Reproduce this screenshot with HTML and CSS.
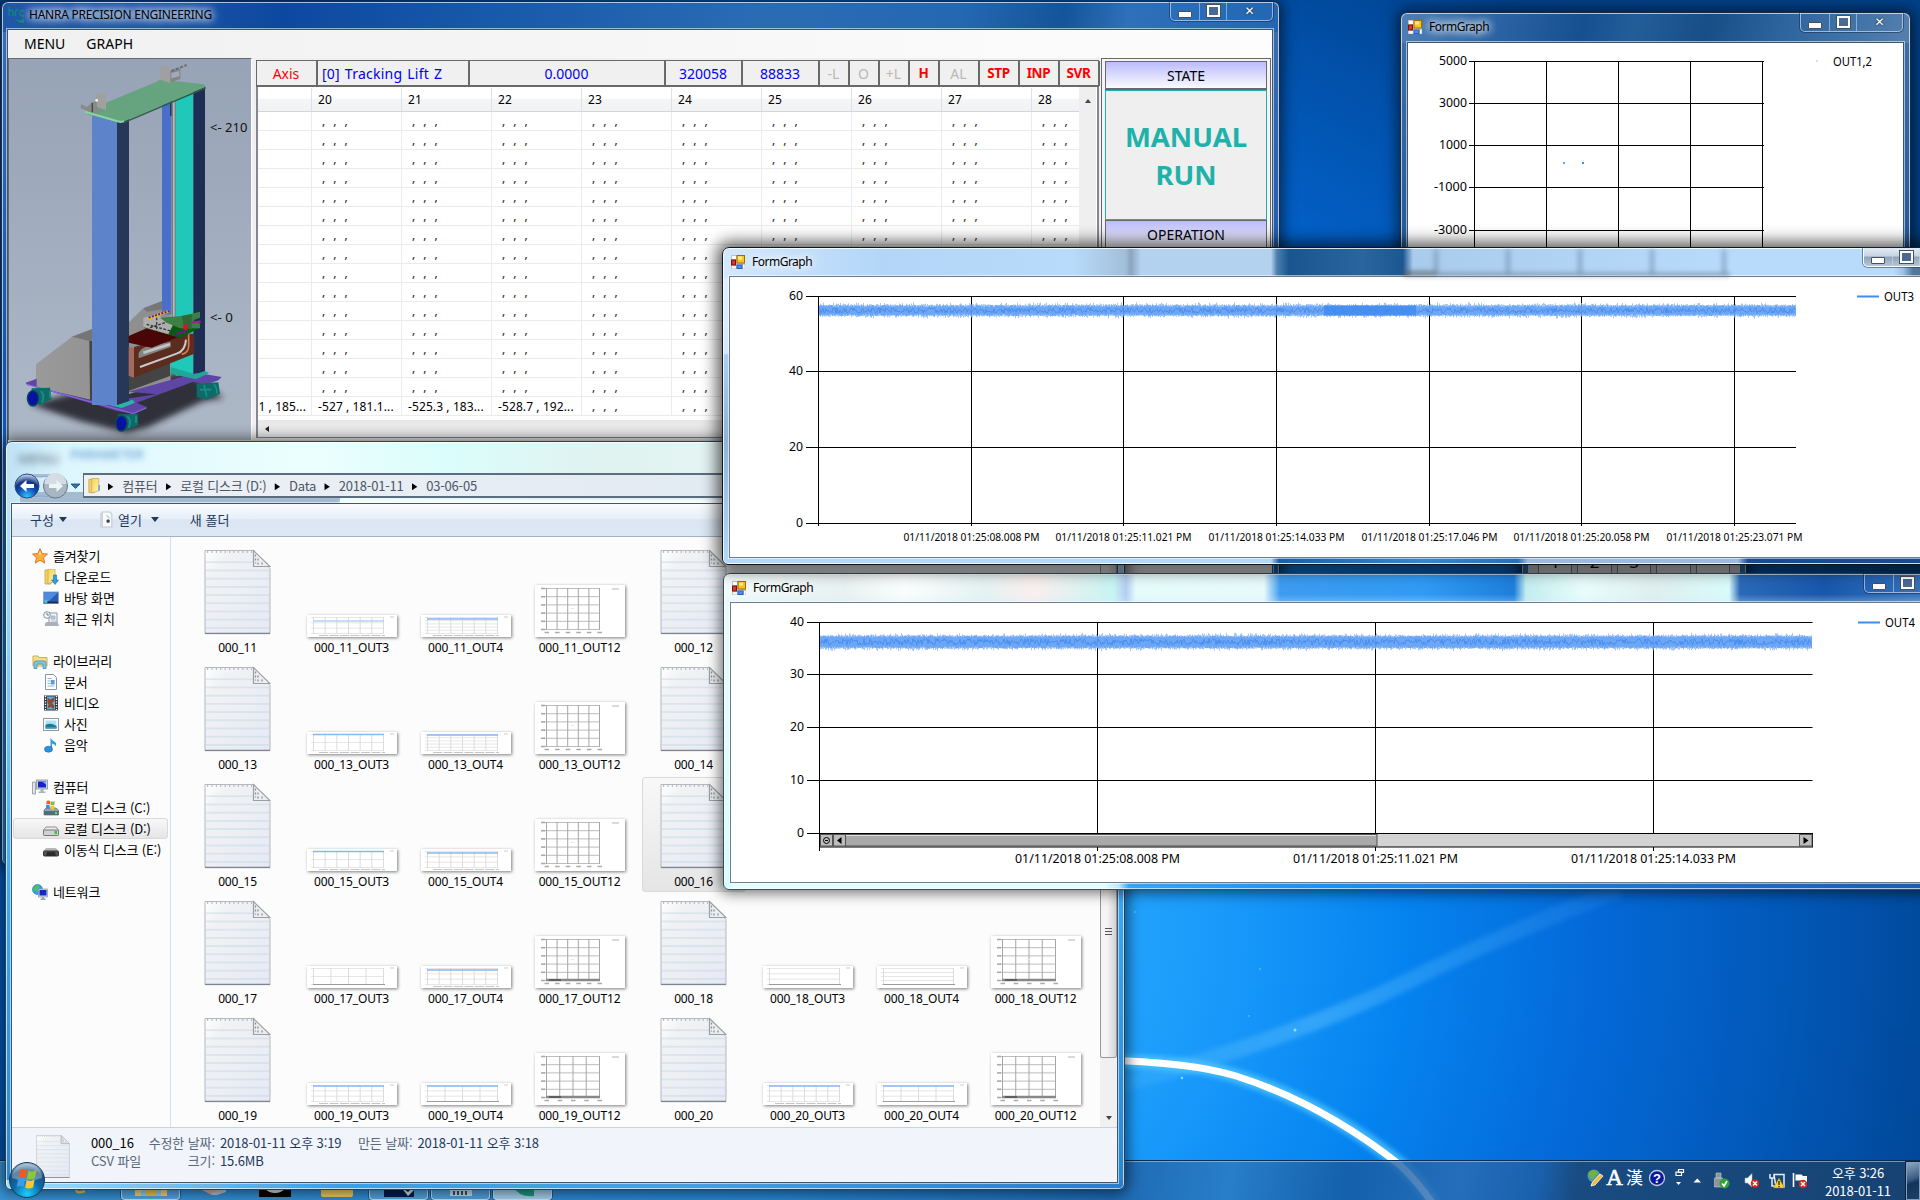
FILE: index.html
```html
<!DOCTYPE html>
<html lang="ko">
<head>
<meta charset="utf-8">
<title>Desktop</title>
<link rel="stylesheet" href="styles.css">
</head>
<body>
<svg class="defs" width="0" height="0">
  <defs>
    <linearGradient id="paper" x1="0" y1="0" x2="1" y2="1"><stop offset="0" stop-color="#fff"/><stop offset=".2" stop-color="#f1f2f4"/><stop offset="1" stop-color="#e6e9f5"/></linearGradient>
    <pattern id="rule" width="67" height="8.2" patternUnits="userSpaceOnUse"><path d="M0 4.5H67" stroke="#c3d7e2" stroke-width="1"/></pattern>
    <linearGradient id="fold" x1="0" y1="0" x2="1" y2="1"><stop offset="0" stop-color="#f6d25c"/><stop offset="1" stop-color="#fdf3b0"/></linearGradient>
    <radialGradient id="orb" cx=".5" cy=".9" r=".9"><stop offset="0" stop-color="#19d0ff"/><stop offset=".45" stop-color="#0a6ba8"/><stop offset=".75" stop-color="#1d4f7c"/><stop offset="1" stop-color="#a9c7db"/></radialGradient>
    <radialGradient id="backb" cx=".5" cy=".95" r=".9"><stop offset="0" stop-color="#39c3ff"/><stop offset=".45" stop-color="#0d4fb4"/><stop offset=".7" stop-color="#12347f"/><stop offset="1" stop-color="#b6c9e6"/></radialGradient>
    <filter id="soft"><feGaussianBlur stdDeviation="9"/></filter>
    <filter id="soft2"><feGaussianBlur stdDeviation="2.5"/></filter>
    <linearGradient id="boxg" x1="0" x2="1"><stop offset="0" stop-color="#9a9a9a"/><stop offset="1" stop-color="#939393"/></linearGradient>

    <symbol id="doc" viewBox="0 0 67 85">
      <path d="M1 1H49L66 19V84H1Z" fill="url(#paper)" stroke="#b4b7bd"/>
      <path d="M1.5 10H52L65 20V83H1.5Z" fill="url(#rule)"/>
      <path d="M3 2.5H48" stroke="#b9bcc4" stroke-width="2" stroke-dasharray="1.2 3.2"/>
      <path d="M49.500 1V17H66Z" fill="#eceef1" stroke="#9b9ea3" stroke-width="1.2"/>
      <path d="M51.500 5v9M54 9v6M58 13v3" stroke="#8d9196" stroke-width="1.300" stroke-dasharray="2 2"/>
      <path d="M1 84H66" stroke="#7e8490" stroke-width="1.6"/>
    </symbol>
    <symbol id="form" viewBox="0 0 14 14">
      <rect width="14" height="14" fill="#c4c4c4"/><rect x="1" y="1" width="4" height="3" fill="#fff"/><rect x="1" y="11" width="4" height="2.500" fill="#f4f4f4"/>
      <rect x="6" y=".5" width="7.500" height="7.500" fill="#fac51c" stroke="#a06c00"/><rect x="7" y="1.500" width="4" height="3" fill="#ffe98c"/>
      <rect x=".5" y="5" width="4" height="5" fill="#d03a2c" stroke="#7c0f0a"/>
      <rect x="6" y="10" width="5" height="3.500" fill="#4b8ef2" stroke="#2a5cc0"/><rect x="12" y="10" width="1.500" height="3.500" fill="#fff"/>
    </symbol>
    <symbol id="star" viewBox="0 0 16 16"><path d="M8 .6l2.200 5 5.300.5-4 3.600 1.200 5.400L8 12.300l-4.700 2.800 1.200-5.400-4-3.600 5.300-.5z" fill="#fbb03c" stroke="#d9782a"/><path d="M8 3l1.300 3.600H6.500z" fill="#ffe3a0"/></symbol>
    <symbol id="folder" viewBox="0 0 16 16"><path d="M2 1h6v14H2z" fill="#f3d169" stroke="#c9a23c" stroke-width=".8"/><path d="M5 0h7.500v13L5 15.500z" fill="url(#fold)" stroke="#d0aa45" stroke-width=".8"/><path d="M13 7v6" stroke="#56a6df" stroke-width="1.500"/></symbol>
    <symbol id="down" viewBox="0 0 16 16"><path d="M2 1h6v14H2z" fill="#f3d169" stroke="#c9a23c" stroke-width=".8"/><path d="M5 0h7v12L5 15z" fill="url(#fold)" stroke="#d0aa45" stroke-width=".8"/><path d="M10.500 6h3v5h2L12 15.500 8.500 11h2z" fill="#2d9fe8" stroke="#1269ac" stroke-width=".6"/></symbol>
    <symbol id="desk" viewBox="0 0 16 16"><rect x=".5" y="2" width="15" height="11.500" fill="#2a5bb5" stroke="#8fa3bb"/><path d="M1 2.500h14L6 11H1z" fill="#4f8ae0"/><rect x="1" y="11.500" width="14" height="1.800" fill="#1d2f4d"/><circle cx="2.800" cy="11.500" r="1.800" fill="#44c0f0"/></symbol>
    <symbol id="recent" viewBox="0 0 16 16"><path d="M6 2h8v11H6z" fill="#f3f5f7" stroke="#8e98a3"/><path d="M8 5h4v3H8zM8 10h5" fill="#b5d0e2" stroke="#95a5b4" stroke-width=".7"/><path d="M2 13l1.500-2h11L16 15H2z" fill="#a9b0b8"/><circle cx="4" cy="4" r="3.300" fill="#f1f6fa" stroke="#8494a4"/><path d="M4 2v2h2" stroke="#566" fill="none" stroke-width=".8"/></symbol>
    <symbol id="lib" viewBox="0 0 16 16"><path d="M1 3h5l1 1.500h8V13H1z" fill="#f7dd82" stroke="#d3ad49"/><path d="M2 15.500V10q0-2 2-2h8q2 0 2 2v5.500h-3V11H5v4.500z" fill="#7cc7ea" stroke="#3d92be" stroke-width=".8"/></symbol>
    <symbol id="page" viewBox="0 0 16 16"><path d="M2.500.5h8l3 3v12h-11z" fill="#fff" stroke="#8795a6"/><path d="M4.500 4.500h4M4.500 7h7M4.500 9.500h7M4.500 12h7" stroke="#8fb2de"/><rect x="8" y="6" width="3.500" height="4.500" fill="#5c9be0"/></symbol>
    <symbol id="video" viewBox="0 0 16 16"><rect x="1" y=".5" width="14" height="15" fill="#333"/><rect x="4" y="1.500" width="8" height="13" fill="#5cb4e6"/><path d="M4.500 2.500l3 2 4-2.500v4l-2.500 2 2.500 3-1 3-3-2-3 1.500 1-4-1-2z" fill="#8d4b35"/><path d="M2.500 1v14M13.500 1v14" stroke="#fff" stroke-width="1.400" stroke-dasharray="1.300 1.300"/></symbol>
    <symbol id="pic" viewBox="0 0 16 16"><rect x=".5" y="2.500" width="15" height="12" fill="#fff" stroke="#8d99a5"/><rect x="2.500" y="4.500" width="11" height="8" fill="#aee0fa"/><path d="M2.500 9q5-3 11 1v2.500h-11z" fill="#1c7c8c"/><path d="M2.500 11h11v1.500h-11z" fill="#3e93d6"/></symbol>
    <symbol id="music" viewBox="0 0 16 16"><path d="M7.500 12V.5q1 3 4.500 4.500 2 1.500.5 4Q12 7 9 6.500V12z" fill="#2e9fe6"/><ellipse cx="5.500" cy="12.200" rx="4" ry="3" fill="#2b93dc" stroke="#1463a6" stroke-width=".6"/></symbol>
    <symbol id="pc" viewBox="0 0 16 16"><path d="M.5 3h3v12h-3z" fill="#dfe3e7" stroke="#8b949d" stroke-width=".8"/><rect x="4.500" y="1" width="11" height="9" fill="#cdd5df" stroke="#8391a0" stroke-width=".8"/><rect x="6" y="2.500" width="8" height="6" fill="#1b22c4"/><path d="M10 2.500h4v3z" fill="#7da2ff"/><path d="M8.500 10h3v2.500h2V14h-7v-1.500h2z" fill="#a9b2bd"/></symbol>
    <symbol id="diskc" viewBox="0 0 16 16"><path d="M1 10l2-2h10l2.500 2v5H1z" fill="#9aa5ac" stroke="#66717a" stroke-width=".7"/><rect x="1" y="11" width="14.500" height="4" fill="#4c707c"/><rect x="12" y="12" width="2" height="2" fill="#59ec3b"/><path d="M3.500 1q2-1 3.500 0v3.500q-2-1-3.500 0z" fill="#ee5a2b"/><path d="M7.500 1.200q2 1 4-.2v3.700q-2 1-4 0z" fill="#7cc243"/><path d="M3 5.200q2-1 3.700 0V9q-2-1-3.700 0z" fill="#3b8ee0"/><path d="M7.300 5.400q2 1 4-.2V9q-2 1-4 0z" fill="#fcc52a"/></symbol>
    <symbol id="disk" viewBox="0 0 16 16"><path d="M3 6h10l2.500 3v5H.5V9z" fill="#ececec" stroke="#8f8f8f"/><rect x=".5" y="9" width="15" height="5.500" rx="1" fill="#cfd1d2" stroke="#777"/><rect x="11.500" y="10" width="2.500" height="3" fill="#3cc42d"/></symbol>
    <symbol id="diske" viewBox="0 0 16 16"><path d="M3 6h10l2.500 3H.5z" fill="#b8b8b8"/><rect x=".5" y="9" width="15" height="5" rx="1" fill="#555" stroke="#333"/><path d="M4 10h8l1 4H3z" fill="#2b2b2b"/></symbol>
    <symbol id="net" viewBox="0 0 16 16"><circle cx="5.500" cy="5.500" r="5" fill="#2ea2e2" stroke="#1d78b0" stroke-width=".6"/><path d="M3 2q4-2 5 1-3 1-2 4-3 1-5-2z" fill="#4fc256"/><rect x="6.500" y="5" width="9" height="8" fill="#cdd8e6" stroke="#8a98a8" stroke-width=".7"/><rect x="7.500" y="6" width="7" height="5.500" fill="#1a25c9"/><path d="M10 13h2v1.500h1.500V16h-5v-1.500H10z" fill="#98a3ad"/></symbol>
    <symbol id="openi" viewBox="0 0 12 16"><path d="M2 1h7l2 2v12H2z" fill="#f8fafb" stroke="#c3c8cd"/><path d="M0 2l2-1v14l-2 1z" fill="#cfd5da"/><path d="M6 4l3 3" stroke="#a9cbe8"/><rect x="6" y="8" width="3" height="3" rx="1" fill="#444"/></symbol>
    <symbol id="no" viewBox="0 0 9 9"><circle cx="4.500" cy="4.500" r="4.300" fill="#d7261c"/><path d="M2.500 2.500l4 4M6.500 2.500l-4 4" stroke="#fff" stroke-width="1.500"/></symbol>
  </defs>
</svg>

<div class="desktop">
  <svg class="wallpaper" width="1920" height="1200" viewBox="0 0 1920 1200">
    <defs>
      <radialGradient id="sky" gradientUnits="userSpaceOnUse" cx="900" cy="930" r="1120">
        <stop offset="0" stop-color="#35b4ff"/><stop offset=".28" stop-color="#1a9bfb"/><stop offset=".45" stop-color="#0583f0"/><stop offset=".62" stop-color="#0469d8"/><stop offset=".8" stop-color="#0257b6"/><stop offset=".93" stop-color="#01489a"/><stop offset="1" stop-color="#014088"/>
      </radialGradient>
      <linearGradient id="ray" gradientUnits="userSpaceOnUse" x1="1120" y1="1090" x2="1600" y2="905"><stop offset="0" stop-color="#7fd0ff" stop-opacity=".1"/><stop offset=".4" stop-color="#6cc8ff" stop-opacity=".4"/><stop offset="1" stop-color="#5ab8ff" stop-opacity=".12"/></linearGradient>
    </defs>
    <rect width="1920" height="1200" fill="url(#sky)"/>
    <path d="M1100 1090Q1290 1040 1400 985T1620 890" fill="none" stroke="url(#ray)" stroke-width="16" filter="url(#soft2)"/>
    <g fill="none">
      <path d="M1100 1061Q1190 1061 1236 1076Q1321 1102 1400 1164Q1420 1182 1434 1204" stroke="#52c8ff" stroke-width="14" opacity=".75" filter="url(#soft2)"/>
      <path d="M1100 1060Q1190 1062 1236 1076Q1321 1103 1400 1165Q1418 1182 1433 1204" stroke="#fff" stroke-width="7"/>
    </g>
    <g fill="#8fdcff"><circle cx="1295" cy="1030" r="1.500"/><circle cx="1182" cy="1078" r="1.200"/><circle cx="1260" cy="969" r=".7"/><circle cx="1249" cy="1016" r=".7"/><circle cx="1135" cy="912" r=".7"/></g>
  </svg>

  <div class="taskbar">
    <div class="apps">
      <span class="app"><svg width="30" height="30" viewBox="0 0 30 30"><circle cx="16" cy="12" r="11" fill="none" stroke="#4ab9ee" stroke-width="5"/><path d="M3 22q-3 8 8 4" stroke="#f3c22f" stroke-width="2.500" fill="none"/></svg></span>
      <span class="app open"><svg width="34" height="30" viewBox="0 0 34 30"><rect x="1" y="3" width="32" height="28" fill="#f7d774"/><rect x="7" y="14" width="20" height="16" fill="#9fcdec"/><rect x="12" y="18" width="10" height="12" fill="#f3c54b"/></svg></span>
      <span class="app"><svg width="30" height="30" viewBox="0 0 30 30"><path d="M2 24L20 6l8 14-12 11z" fill="#dca9a0"/><path d="M14 28l14-7v6l-12 4z" fill="#b9c7cf"/></svg></span>
      <span class="app"><svg width="32" height="32"><rect width="32" height="32" fill="#050505"/><circle cx="16" cy="14" r="14" fill="#ddd"/></svg></span>
      <span class="app"><svg width="32" height="32"><rect y="4" width="32" height="28" rx="2" fill="#efcf5c"/></svg></span>
      <span class="app open"><svg width="30" height="31"><rect width="30" height="31" fill="#031c50"/><path d="M16 20l8 6 6-6v4l-6 6z" fill="#cfe0f0"/></svg></span>
      <span class="app open"><svg width="30" height="30"><rect x="4" y="8" width="22" height="22" fill="#bfe0f4"/><path d="M7 27h16" stroke="#356" stroke-width="4" stroke-dasharray="2 2"/></svg></span>
      <span class="app open lit"><svg width="30" height="31"><path d="M4 20q14-8 22-4v14q-14 2-22-10z" fill="#1e9a86"/></svg></span>
    </div>
    <div class="tray">
      <svg width="240" height="38" viewBox="0 1 240 38">
        <g transform="translate(9 0)"><circle cx="15" cy="16" r="6.500" fill="#4d98b4"/><path d="M9 13q5-6 10 0l-6 7z" fill="#6fb23e"/><path d="M13 23l8-9 3 2-8 9-4 1z" fill="#f2bb37" stroke="#fff" stroke-width=".8"/></g>
        <text x="44.500" y="25" class="ime-a">A</text><text x="64.500" y="24" class="ime-h">漢</text>
        <circle cx="87" cy="18" r="7.500" fill="#0a189c" stroke="#c3cbe0" stroke-width="1.300"/><text x="87" y="22.500" class="ime-q">?</text>
        <path d="M108.500 9.500h5v3h-5zM106 12h5.500v3.500H106z" fill="none" stroke="#fff" stroke-width="1.200"/><path d="M106 22h5l-2.500 3z" fill="#fff"/>
        <path d="M123.500 22.500h7.500l-3.750-4z" fill="#fff"/>
        <path d="M146 13h5v5h-5zM144.500 18h8v9h-8z" fill="#8f9496" stroke="#c6cbcd" stroke-width=".6"/><circle cx="154.500" cy="23.500" r="5" fill="#2ea336"/><path d="M152 23.500l2 2.500 3-5" fill="none" stroke="#fff" stroke-width="1.600"/>
        <path d="M175 18h2.500l4.500-4.500v13.500L177.500 23H175z" fill="#fff" stroke="#9aa" stroke-width=".6"/><use href="#no" x="180.500" y="19" width="9" height="9"/>
        <path d="M200 14v4h4v-4M202 18v8h4M204 14.500h10V27h-8z" fill="none" stroke="#e6eef5" stroke-width="1.500"/><path d="M209 18l5.500 10h-11z" fill="#fbd529" stroke="#8d7508" stroke-width=".5"/><path d="M209 21v4M209 26v1.200" stroke="#222" stroke-width="1.300"/>
        <path d="M223.500 13v14" stroke="#fff" stroke-width="1.600"/><path d="M225.500 14.500h6l1.500 1.500h4v6h-5l-1-1.500h-5.500z" fill="#fff"/><use href="#no" x="228.500" y="19.500" width="9" height="9"/>
      </svg>
      <div class="clock"><span>오후 3:26</span><span>2018-01-11</span></div>
      <div class="peek"></div>
    </div>
  </div>

  <section class="win main-win">
    <header class="title">
      <svg class="hrc" width="17" height="17" viewBox="0 0 17 17"><path d="M1 1v9M1 5q3-2 4 1v4M7.500 10V5q1-1.500 3-1M16 4.500q-4-1-4 2.500t4 3" fill="none" stroke="#0e8a78" stroke-width="1.300"/><path d="M6 12q5 4 10 1v4q-6 0-10-5z" fill="#0e8a78"/></svg>
      <span class="caption">HANRA PRECISION ENGINEERING</span>
    </header>
    <div class="caps wide"><i class="min"></i><i class="max"></i><i class="x">✕</i></div>
    <div class="client main-client">
      <nav class="menubar"><span>MENU</span><span>GRAPH</span></nav>
      <div class="work">
        <div class="picture">
          <svg width="243" height="382" viewBox="27 24 729 1146">
            <path d="M90 1060L280 1010 560 960 670 1040 610 1050 440 1130 380 1145 240 1110Z" fill="#20242b" opacity=".9" filter="url(#soft)"/>
            <path d="M380 820L430 772 487 750 512 780V990L386 1030Z" fill="#8f8f8f"/><path d="M430 772L487 750V775L440 782Z" fill="#777"/><path d="M386 975L510 925V975L386 1020Z" fill="#444"/>
            <rect x="486" y="150" width="28" height="640" fill="#4a6fca"/><rect x="510" y="150" width="5" height="45" fill="#22345c"/>
            <rect x="515" y="148" width="13" height="790" fill="#777a80"/><rect x="519" y="148" width="5" height="790" fill="#b7b9bb"/>
            <path d="M527 145L580 125V965L527 975Z" fill="#1fc8b8"/><path d="M512 850H580V972L512 958Z" fill="#1fc8b8"/>
            <path d="M580 122L615 108V965L580 972Z" fill="#1f2c54"/>
            <path d="M108 940L216 857 277 834V1048L108 1008Z" fill="url(#boxg)"/><path d="M216 857L277 834V868L268 870Z" fill="#757575"/><path d="M268 870H277V1048H270Z" fill="#444"/>
            <path d="M77 995L110 983V1008L275 1048 400 1040 470 1030 385 1022 590 965 665 978 655 988 620 1000 580 992 410 1055 440 1068 400 1088 350 1080 80 1000Z" fill="#5f45a6"/>
            <path d="M80 1000L400 1088 440 1070" fill="none" stroke="#8a63d8" stroke-width="4"/>
            <path d="M277 1042L350 1062 398 1046 405 1055 365 1071 277 1050Z" fill="#27b6a6"/><path d="M512 948L585 970 615 960 628 966 588 985 512 968Z" fill="#1fa898"/>
            <rect x="276" y="195" width="76" height="867" fill="#5d83ca"/><path d="M351 212L387 195V1050L351 1062Z" fill="#273757"/>
            <path d="M258 180L470 92Q480 84 492 86L610 100Q620 104 614 109L370 212Q360 216 348 212L262 190Z" fill="#66a37f"/>
            <path d="M372 212L617 108V113L372 217Z" fill="#2e5e45"/><path d="M255 182L350 210 362 213 372 211" stroke="#86d5a6" stroke-width="6" fill="none"/>
            <path d="M481 50Q498 36 511 54V96L481 86Z" fill="#a0a0a0"/><path d="M511 94V60L541 52V84Z" fill="#858585"/><path d="M514 82V66L538 60V76Z" fill="#9fabba"/><path d="M514 60L560 42" stroke="#6d6d6d" stroke-width="6" stroke-dasharray="10 4"/>
            <path d="M287 135Q302 114 318 132V178L287 166Z" fill="#a0a0a0"/><path d="M243 160L262 168 275 154 290 150 292 178 315 176 290 188 262 180 242 172Z" fill="#8a8a8a"/><path d="M277 156V184" stroke="#444" stroke-width="4"/><circle cx="290" cy="148" r="4" fill="#fff"/>
            <path d="M402 888L545 850 583 848V908L402 980Z" fill="#5c2c1e"/><path d="M386 888L402 890V980L386 974Z" fill="#a36b60"/>
            <path d="M416 922V906Q424 890 445 886L512 872V888Z" fill="#858585"/><path d="M430 905L510 880" stroke="#c4c4c4" stroke-width="8"/>
            <path d="M420 948L530 908Q556 900 558 866" stroke="#c9cdd2" stroke-width="6" fill="none"/><path d="M566 850V885Q566 905 545 910" stroke="#d97a50" stroke-width="5" fill="none"/>
            <path d="M386 855L440 832 535 858 455 890 386 875Z" fill="#4a0506"/>
            <path d="M430 830L505 815 600 830 540 862 505 850Z" fill="#0a5a14"/><path d="M430 800L470 790 520 820 505 850 430 828Z" fill="#aeaeae"/><path d="M440 820L520 842M450 830L510 810M470 800V840" stroke="#333" stroke-width="4" stroke-dasharray="8 5"/>
            <path d="M480 800L545 795 600 782V800L580 808 600 818V832L540 832 500 815Z" fill="#3d8044"/><path d="M545 795L575 790V835L552 830Z" fill="#2d6a35"/>
            <path d="M443 803L508 780" stroke="#d8c926" stroke-width="8"/><path d="M446 800L508 780" stroke="#7a1090" stroke-width="6" stroke-dasharray="6 4"/><path d="M530 850L560 838" stroke="#7a10a0" stroke-width="6"/><path d="M575 814L602 812" stroke="#a02090" stroke-width="7"/><rect x="550" y="820" width="12" height="16" fill="#e0102c"/>
            <g fill="#0e6b68"><path d="M95 1012L150 1010 155 1045 120 1062 90 1050Z"/><path d="M355 1090L413 1088 415 1122 380 1138 350 1120Z"/><path d="M590 998L655 994 660 1028 620 1046 590 1038Z"/></g>
            <g fill="none" stroke="#17908a" stroke-width="5"><path d="M122 1020q14 12 4 36M150 1020v22M382 1096q14 10 4 34M408 1094v22M600 1016h34M612 1002l8 34M642 1000q10 10 8 28"/></g>
            <g fill="#0a12a0" stroke="#0b4a60" stroke-width="4"><ellipse cx="99" cy="1042" rx="17" ry="23"/><ellipse cx="364" cy="1117" rx="17" ry="23"/></g>
            <text x="630" y="243" class="axis-note" textLength="112" lengthAdjust="spacingAndGlyphs">&lt;- 210</text>
            <text x="630" y="813" class="axis-note" textLength="69" lengthAdjust="spacingAndGlyphs">&lt;- 0</text>
          </svg>
        </div>
        <div class="data">
          <div class="axisbar">
            <span class="c w61 red">Axis</span><span class="c w152 left">[0] Tracking Lift Z</span><span class="c w196">0.0000</span><span class="c w77">320058</span><span class="c w77">88833</span><span class="c w30 off">-L</span><span class="c w30 off">O</span><span class="c w30 off">+L</span><span class="c w30 red b">H</span><span class="c w40 off">AL</span><span class="c w40 red b">STP</span><span class="c w40 red b">INP</span><span class="c w40 red b">SVR</span>
          </div>
          <div class="list">
            <div class="list-body"><div id="rows" class="rows"></div><div class="vscroll"></div></div>
            <div class="hscroll"></div>
          </div>
        </div>
        <aside class="state">
          <div class="band">STATE</div>
          <div class="mode">MANUAL<br>RUN</div>
          <div class="band">OPERATION</div>
        </aside>
      </div>
    </div>
  </section>

  <section class="win keypad"><div class="keys"><span>1</span><span>2</span><span>3</span><span></span><span></span></div></section>

  <section class="win form1">
    <header class="title"><svg width="14" height="14"><use href="#form"/></svg><span class="caption">FormGraph</span></header>
    <div class="caps wide"><i class="min"></i><i class="max"></i><i class="x">✕</i></div>
    <div class="client"><svg id="chart1" width="496" height="300" viewBox="1408 43 496 300"></svg></div>
  </section>

  <section class="win explorer">
    <div class="navbar">
      <svg width="70" height="28" viewBox="0 0 70 28"><path d="M14 2Q28 8 44 2M14 26Q28 22 44 26" stroke="#8ea7c6" fill="#a9bdd6"/><circle cx="15" cy="14" r="12" fill="url(#backb)" stroke="#2d4a80"/><path d="M8 14l6.500-6v4H22v4h-7.500v4z" fill="#fff"/><circle cx="43.500" cy="14" r="12" fill="#a7b6c2" stroke="#66788c"/><path d="M32.500 12a11 11 0 0 1 22 0z" fill="#d4dde4"/><path d="M51 14l-6.500-6v4H37v4h7.500v4z" fill="#eef3f7"/><path d="M59 12h9l-4.500 4.500z" fill="#2f77b5" stroke="#164878" stroke-width=".8"/></svg>
      <div class="address"><svg width="15" height="18"><use href="#folder"/></svg><b>▶</b><span>컴퓨터</span><b>▶</b><span>로컬 디스크 (D:)</span><b>▶</b><span>Data</span><b>▶</b><span>2018-01-11</span><b>▶</b><span>03-06-05</span></div>
    </div>
    <div class="client ex-client">
      <div class="toolbar"><span>구성</span><em></em><svg width="13" height="17"><use href="#openi"/></svg><span class="t2">열기</span><em></em><span class="t3">새 폴더</span></div>
      <div class="panes">
        <nav class="tree" id="tree"></nav>
        <div class="files"><div class="grid" id="files"></div></div>
        <div class="escroll"><div class="thumb"><s></s><s></s><s></s></div><div class="arrow"></div></div>
      </div>
      <footer class="details">
        <svg width="34" height="43" viewBox="0 0 67 85"><use href="#doc"/></svg>
        <div class="meta">
          <div class="mrow"><b class="name">000_16</b><label>수정한 날짜:</label><span>2018-01-11 오후 3:19</span><label class="l2">만든 날짜:</label><span>2018-01-11 오후 3:18</span></div>
          <div class="mrow"><b class="kind">CSV 파일</b><label>크기:</label><span>15.6MB</span></div>
        </div>
      </footer>
    </div>
  </section>

  <section class="win form4">
    <header class="title"><svg width="14" height="14"><use href="#form"/></svg><span class="caption">FormGraph</span></header>
    <div class="caps"><i class="min"></i><i class="max"></i><i class="x">✕</i></div>
    <div class="client"><svg id="chart4" width="1190" height="280" viewBox="731 603 1190 280"></svg></div>
  </section>

  <section class="win form3">
    <header class="title"><svg width="14" height="14"><use href="#form"/></svg><span class="caption">FormGraph</span></header>
    <div class="caps"><i class="min"></i><i class="max"></i><i class="x">✕</i></div>
    <div class="client"><svg id="chart3" width="1191" height="280" viewBox="730 277 1191 280"></svg></div>
  </section>

  <svg class="start" width="38" height="38" viewBox="0 0 38 38"><circle cx="19" cy="19" r="17.500" fill="url(#orb)" stroke="#163c5e"/><path d="M4 17A15 14 0 0 1 34 17Q19 23 4 17Z" fill="#fff" opacity=".3"/><path d="M12 9q4-2 7 0l-1.500 8q-3-2-7 0z" fill="#ee5a24"/><path d="M20.500 9.500q4 2 8-.5L27 17q-4 2.500-8 .5z" fill="#8cc63f"/><path d="M10 18.500q4-2 7.200 0L15.700 26q-3-2-7 0z" fill="#3f9bea"/><path d="M18.600 19q4 2 8-.5l-1.500 8q-4 2-8 .3z" fill="#fdc72d"/></svg>
</div>
<script src="app.js"></script>
</body>
</html>
```
FILE: styles.css
```css
* { box-sizing: border-box; }
body { margin: 0; background: #0257b6; font-family: "Noto Sans", "Noto Sans CJK KR", sans-serif; font-size: 12px; color: #000; overflow: hidden; }
.defs { position: absolute; }
.desktop { position: relative; width: 1920px; height: 1200px; overflow: hidden; }
.wallpaper { display: block; }

/* window frames */
.win { position: absolute; display: flex; flex-direction: column; border: 1px solid #1b2c3f; border-radius: 7px 7px 6px 6px; padding: 0 6px 6px; box-shadow: inset 0 0 0 1px rgba(255,255,255,.65), 0 0 14px 3px rgba(0,0,0,.55); }
.title { flex: none; display: flex; align-items: center; height: 28px; gap: 7px; padding: 0 0 2px 1px; }
.caption { text-shadow: 0 0 8px #fff, 0 0 8px #fff, 0 0 12px rgba(255,255,255,.8); letter-spacing: -.5px; white-space: nowrap; }
.client { flex: 1; min-height: 0; overflow: hidden; background: #fff; border: 1px solid #40566e; box-shadow: 0 0 0 1px rgba(255,255,255,.55); }
.client > svg { display: block; }
.caps { position: absolute; top: 0; left: 1140px; height: 19px; display: flex; border: 1px solid rgba(220,235,255,.6); border-top: 0; border-radius: 0 0 5px 5px; box-shadow: 0 0 0 1px rgba(20,40,70,.5); }
.caps i { width: 29px; display: flex; align-items: center; justify-content: center; font-style: normal; border-right: 1px solid rgba(200,220,245,.55); }
.caps i.max { width: 27px; }
.caps i.x { width: 45px; border: 0; color: #fff; font: bold 12px "DejaVu Sans", sans-serif; text-shadow: 0 0 1px #234, 0 0 2px #234; }
.caps .min::before { content: ""; width: 12px; height: 5px; margin-top: 7px; background: #fff; border: 1px solid #45505e; border-radius: 1px; }
.caps .max::before { content: ""; width: 9px; height: 8px; background: #4a6a94; border: 2.5px solid #fff; outline: 1px solid #45505e; }

/* machine control window */
.main-win { left: 1px; top: 1px; width: 1279px; height: 864px; padding-left: 5px; background: linear-gradient(100deg, #2157a8 0, #1d55a6 12%, #0d48a0 22%, #1759aa 38%, #2a6cb4 60%, #2468b2 75%, #145499 83%, #2e70ba 88%, #2366b2 100%) 0 0/100% 30px no-repeat, linear-gradient(#3b6fb5, #0f54b0 45%, #1b83e4); }
.main-win .title { height: 27px; padding: 0 0 2px 1px; gap: 4px; }
.main-win .caption { letter-spacing: -.25px; font-size: 12px; }
.main-win .caps { left: 1168px; }
.main-client { background: #f0f0f0; display: flex; flex-direction: column; }
.menubar { flex: none; display: flex; gap: 21px; height: 28px; padding: 0 0 2px 16px; align-items: center; font-size: 14px; background: linear-gradient(90deg, #f0f0f0, #fdfdfd); }
.work { flex: none; height: 382px; display: flex; }
.picture { flex: none; width: 244px; height: 382px; border-top: 1px solid #696969; border-left: 1px solid #696969; border-right: 1px solid #fff; background: linear-gradient(#97a3b6, #a9b4c4 80%, #adb8c6); overflow: hidden; }
.picture svg { display: block; }
.axis-note { font: 39px "Noto Sans", sans-serif; fill: #111; }
.data { width: 843px; margin: 2px 0 0 4px; display: flex; flex-direction: column; }
.axisbar { display: flex; height: 27px; background: #696969; padding: 1px 0 1px 1px; gap: 0; }
.c { flex: none; background: #f0f0f0; border-right: 2px solid #696969; border-bottom: 1px solid #696969; color: #0000f0; font-size: 14px; display: flex; align-items: center; justify-content: center; padding-right: 1px; }
.c.left { justify-content: flex-start; padding-left: 4px; letter-spacing: .25px; word-spacing: 1px; }
.w61 { width: 61px; } .w152 { width: 152px; } .w196 { width: 196px; } .w77 { width: 77px; } .w30 { width: 30px; } .w40 { width: 40px; }
.c.red { color: #f00; } .c.off { color: #b8b8b8; } .c.b { font-weight: bold; font-size: 13.5px; letter-spacing: -.3px; }
.list { flex: none; height: 351px; border: 1px solid #828790; border-width: 0 2px 1px; background: #fff; }
.list-body { display: flex; height: 333px; }
.rows { flex: 1; overflow: hidden; padding-top: 1px; }
.row { display: flex; height: 19px; margin-left: -36px; border-bottom: 1px solid #ebebeb; }
.row.head { height: 24px; background: linear-gradient(#fff 45%, #f4f5f7 50%, #f1f2f4); border-color: #d5d5d5; }
.row span { flex: none; width: 90px; padding: 1px 0 0 6px; border-right: 1px solid #ececec; line-height: 18px; white-space: pre; letter-spacing: .1px; }
.row.head span { line-height: 22px; border-color: #dfe0e3; }
.row span.tail { text-align: right; padding-right: 5px; }
.row span.mark { padding: 0 0 0 10px; word-spacing: 4.6px; color: #333; font-weight: 500; }
.vscroll { width: 17px; background: #efefef; margin-right: 1px; display: flex; justify-content: center; padding-top: 8px; }
.vscroll::before { content: ""; height: 4px; border: 3.5px solid transparent; border-bottom: 4px solid #444; border-top: 0; }
.hscroll { height: 17px; background: linear-gradient(#e8e8e8, #f0f0f0); display: flex; align-items: center; padding-left: 7px; }
.hscroll::before { content: ""; border: 3.5px solid transparent; border-right: 4px solid #222; border-left: 0; }
.state { width: 170px; margin: 0 0 0 2px; padding: 2px 3px 0; border: 1px solid #696969; background: #f4f4f8; display: flex; flex-direction: column; }
.band { height: 29px; flex: none; border: 2px solid #696969; border-width: 1px 1px 2px; background: linear-gradient(#bcbcfd, #fafaff); display: flex; align-items: center; justify-content: center; font-size: 14px; }
.mode { height: 130px; flex: none; border: 1px solid #20b2aa; background: #efefef; color: #20b2aa; font-weight: bold; font-size: 27.5px; line-height: 38px; text-align: center; padding-top: 27px; }

/* small keypad window showing between the graphs */
.keypad { left: 1521px; top: 500px; width: 226px; height: 120px; background: #2a6cab; padding: 4px 6px; }
.keys { flex: 1; background: #c8ccd4; display: flex; gap: 5px; padding: 30px 10px 0; }
.keys span { flex: 1; height: 46px; border: 1px solid #777; font-size: 17px; text-align: center; line-height: 52px; background: #d7d9de; }

/* graph windows */
.form1 { left: 1400px; top: 12px; width: 511px; height: 330px; background: linear-gradient(105deg, #4f80b6 0, #2a62a3 20%, #175091 36%, #235d99 46%, #174e86 60%, #2e659e 75%, #5480ae 100%) 0 0/100% 30px no-repeat, linear-gradient(#3f73ac, #174f93); }
.form1 .title { height: 29px; }
.form1 .caps { left: 399px; }
.form3 { left: 722px; top: 247px; width: 1320px; height: 318px; border-color: #0e1720; box-shadow: inset 0 0 0 1px rgba(255,255,255,.8), 0 0 16px 5px rgba(0,0,0,.65); background:
  linear-gradient(90deg, #d3e8fc 0, #c7e1fb 60px, #b3d6f8 160px, #b8dbfb 350px, #a2bfda 402px, #8ba5c0 408px, #b3d2f0 418px 548px, #4c7fae 554px, #1b558f 566px, #2b659e 640px, #1d5791 680px, #a9cbec 690px, #b9dbfb 1000px, #b9dbfb 1170px, #9dc0e2 1180px, #54789d 1190px, #2a4d75) 0 0/100% 30px no-repeat,
  linear-gradient(#e4f1fd, #d5e9fc 105px, #a9cff2 107px, #8fb4d8 190px, #b5d7f8) 0 0/8px 100% no-repeat,
  linear-gradient(90deg, #b5d7f8 0 548px, #1c5fa5 556px, #3a86c8 700px, #2a6fb4 795px, #9dbbe0 805px, #9dbbe0 1015px, #174d8e 1025px); }
.form3::before { content: ""; position: absolute; left: 680px; top: 1px; width: 365px; height: 27px; filter: blur(2.5px); background:
  linear-gradient(#555, #555) 0 22px/34px 9px no-repeat, linear-gradient(#566a80, #566a80) 33px 24px/294px 6px no-repeat,
  repeating-linear-gradient(90deg, transparent 0 31px, #6f8ba7 31px 35px, transparent 35px 72px) 0 0/330px 100% no-repeat; opacity: .65; }
.form4 { left: 723px; top: 573px; width: 1320px; height: 317px; border-color: #3b4c5c; background:
  linear-gradient(rgba(255,255,255,0) 70%, rgba(210,235,255,.35)) 0 0/100% 29px no-repeat,
  linear-gradient(90deg, #f2fbfb 0, #e8f1f1 120px, #fbfdfd 180px, #e4f2f2 260px, #fbeeee 310px, #c6f4f2 390px, #b3cdf2 402px, #e4fcfa 412px, #e9fafc 540px, #3d9bf0 556px, #2f9bf4 700px, #1e7fdb 790px, #c3ecef 802px, #e8fdfb 860px, #dfeeee 930px, #d8fbfb 1005px, #2b69b8 1016px, #1857ab 1100px, #3570b8 1195px) 0 0/100% 30px no-repeat,
  linear-gradient(#eafafa, #d5ffff) 0 0/8px 100% no-repeat,
  linear-gradient(90deg, #e4fffb 0 380px, #bfe6ff 395px, #33a5fb 405px, #1b90f6 600px, #1d6dc4 1000px, #1656a6); }
.form3 .title, .form4 .title { padding-left: 2px; padding-bottom: 1px; }
.form3 .client, .form4 .client { border-color: #6b7d8e; }
.form3 .caps { background: linear-gradient(#e2ecf6, #c6d3e0 45%, #8fa3b8 50%, #b5c6d8); border-color: #fff; }
.tick { font: 13px "Noto Sans", sans-serif; }
.xs { font: 11px "Noto Sans", sans-serif; }

/* explorer */
.explorer { left: 5px; top: 441px; width: 1120px; height: 749px; padding: 0 6px 6px 5px; border-color: #24425e; background:
  linear-gradient(90deg, rgba(255,255,255,0) 0 330px, #f5fbfc 345px) 0 58px/100% 5px no-repeat,
  linear-gradient(90deg, #a4bbd0, #a4bbd0) 14px 50px/320px 13px no-repeat,
  linear-gradient(90deg, #bfe2f6 0, #ddf6fd 60px, #ecfffe 300px, #dbfdfb 440px, #e0f3f1 590px, #f2f8f7) 0 0/100% 63px no-repeat,
  linear-gradient(90deg, #a4ddfb, #3b9fe4 30%, #4a9fdb 60%, #2c7cc8) 0 100%/100% 9px no-repeat,
  linear-gradient(#cfeeff, #3ba9f4 60%, #2b86cf); }
.explorer::before { content: "MENU"; position: absolute; left: 12px; top: 7px; font-size: 14px; color: #567; filter: blur(3.5px); }
.explorer::after { content: "PARAMETER"; position: absolute; left: 64px; top: 3px; font-size: 13px; color: #4a88cc; filter: blur(3px); }
.navbar { flex: none; height: 61px; display: flex; align-items: flex-start; padding: 30px 0 0 1px; }
.navbar > svg { flex: none; margin-right: 1px; }
.address { flex: 1; height: 25px; margin-top: 1px; border: 1px solid #5d6d80; border-width: 2px 1px; display: flex; align-items: center; padding-left: 3px; background: linear-gradient(90deg, #eef1f6, #e0e9f2 70%, #d4e0e6); color: #4c5563; font-size: 13px; white-space: nowrap; font-family: "Noto Sans CJK KR", sans-serif; }
.address { letter-spacing: -.2px; }
.address b { font: 7px "DejaVu Sans", sans-serif; color: #000; width: 6px; margin: 0 8.3px; transform: scaleY(1.3); }
.address svg + b { margin-left: 6px; }
.ex-client { display: flex; flex-direction: column; background: #fcfcfc; }
.toolbar { flex: none; height: 33px; display: flex; align-items: center; padding: 0 0 2px 18px; background: linear-gradient(#fafcfe, #e7eff9 45%, #dbe5f3 50%, #dde8f5); border-bottom: 1px solid #a3b1c8; color: #1e395b; font: 13px "Noto Sans CJK KR", sans-serif; }
.toolbar em { border: 4px solid transparent; border-top: 5px solid #1e395b; border-bottom: 0; margin-left: 5px; }
.toolbar svg { margin: 0 5px 0 33px; }
.toolbar .t2 + em { margin-left: 9px; }
.toolbar .t3 { margin-left: 31px; }
.panes { flex: 1; display: flex; min-height: 0; }
.tree { flex: none; width: 159px; border-right: 1px solid #cfe0f2; padding: 8px 0 0; font: 13px "Noto Sans CJK KR", sans-serif; letter-spacing: -.15px; }
.tree div { display: flex; align-items: center; height: 21px; gap: 5px; padding-left: 29px; margin: 0 2px 0 1px; border: 1px solid transparent; border-width: 0 1px; white-space: nowrap; }
.tree div.top { padding-left: 18px; }
.tree .gap { height: 21px; }
.tree .sel { border: 1px solid #d9d9d9; border-radius: 3px; background: linear-gradient(#f8f8f8, #e5e5e5); }
.files { flex: 1; overflow: hidden; }
.grid { display: grid; grid-template-columns: repeat(8, 114px); grid-auto-rows: 117px; margin: -111px 0 0 9.5px; }
.file { display: flex; flex-direction: column; align-items: center; justify-content: flex-end; height: 115px; padding-bottom: 1px; }
.file.sel { background: linear-gradient(#f8f8f8, #e5e5e5); border: 1px solid #d9d9d9; border-radius: 3px; padding-bottom: 0; margin: 0 5px; }
.file span { height: 18px; line-height: 18px; margin-top: 4px; letter-spacing: -.15px; }
.file .shot { background: #fff; box-shadow: 1px 1px 3px rgba(0,0,0,.5); margin-bottom: -2px; width: 90px; }
.escroll { flex: none; width: 17px; display: flex; flex-direction: column; background: #f0f0f0; }
.thumb { height: 521px; border: 1px solid #979797; border-radius: 2px; background: linear-gradient(90deg, #f4f4f4 40%, #d2d2d4); display: flex; flex-direction: column; align-items: center; gap: 2px; padding-top: 390px; }
.thumb s { width: 7px; height: 1px; background: #555; }
.arrow { flex: 1; display: flex; align-items: flex-end; justify-content: center; padding-bottom: 7px; }
.arrow::before { content: ""; border: 3.5px solid transparent; border-top: 4px solid #444; border-bottom: 0; }
.details { flex: none; height: 55px; background: #f1f5fb; border-top: 1px solid #c6d3e4; display: flex; padding: 7px 0 0 24px; font: 13px "Noto Sans CJK KR", sans-serif; letter-spacing: -.1px; }
.meta { margin-left: 21px; padding-top: 0; }
.mrow { display: flex; height: 18px; line-height: 15px; color: #1e395b; white-space: nowrap; }
.mrow b { font-weight: normal; width: 50px; color: #000; }
.mrow b.kind { color: #5a6779; width: 60px; }
.mrow label { color: #5a6779; width: 74px; text-align: right; margin-right: 5px; }
.mrow .kind + label { width: 64px; }
.mrow label.l2 { width: 71px; }

/* taskbar */
.taskbar { position: absolute; left: 0; right: 0; bottom: 0; height: 40px; border-top: 1px solid #0a2b50; box-shadow: inset 0 1px 0 rgba(170,210,245,.6); display: flex; justify-content: space-between; background: linear-gradient(100deg, rgba(58,150,215,.95) 0, rgba(42,130,205,.92) 40%, rgba(30,100,170,.9) 58%, rgba(46,122,190,.8) 64%, rgba(24,88,155,.8) 70%, rgba(44,108,178,.8) 76%, rgba(30,95,165,.85) 80%, rgba(26,74,125,.95) 82%, rgba(24,66,112,.95)); }
.apps { display: flex; padding: 1px 0 0 59px; gap: 3px; }
.app { width: 59px; display: flex; justify-content: center; padding-top: 3px; }
.app.open { border: 1px solid rgba(210,235,255,.8); border-radius: 4px; background: rgba(150,205,240,.35); box-shadow: 0 0 0 1px rgba(20,60,100,.6); }
.app.lit { background: rgba(215,240,250,.7); }
.tray { display: flex; color: #fff; }
.ime-a { font: 23px "Liberation Serif", serif; fill: #fff; text-anchor: middle; stroke: #fff; stroke-width: .6; }
.ime-h { font: 17px "Noto Sans CJK JP", sans-serif; fill: #fff; text-anchor: middle; }
.ime-q { font: bold 13px "Liberation Sans", sans-serif; fill: #fff; text-anchor: middle; }
.clock { width: 88px; display: flex; flex-direction: column; align-items: center; font: 13px/17.5px "Noto Sans CJK KR", sans-serif; padding-top: 3px; letter-spacing: -.1px; }
.peek { width: 14px; margin: 1px 0 0 4px; border: 1px solid #7f9fbd; background: linear-gradient(160deg, #8aa6c0, #3a5a80 45%, #12335c 55%, #1c4068); box-shadow: 0 0 0 1px #0b2340; }
.tray > svg { margin-right: 4px; }
.start { position: absolute; left: 8px; top: 1161px; }
```
FILE: app.js
```js
const $ = id => document.getElementById(id);

// repeatable noise for the sampled signals
let seed = 7;
const rnd = () => (seed = (seed * 16807) % 2147483647) / 2147483647;

// point table
const head = ['', '20', '21', '22', '23', '24', '25', '26', '27', '28'];
let rows = '<div class="row head">' + head.map(h => `<span>${h}</span>`).join('') + '</div>';
for (let r = 0; r < 16; r++) {
  const vals = r === 15 ? ['1 , 185...', '-527 , 181.1...', '-525.3 , 183...', '-528.7 , 192...'] : [''];
  rows += '<div class="row">' + head.map((h, i) =>
    i < vals.length ? `<span${i ? '' : ' class="tail"'}>${vals[i]}</span>` : '<span class="mark">, , ,</span>').join('') + '</div>';
}
$('rows').innerHTML = rows;

// navigation tree
const tree = [
  ['star', '즐겨찾기', 'top'], ['down', '다운로드'], ['desk', '바탕 화면'], ['recent', '최근 위치'], null,
  ['lib', '라이브러리', 'top'], ['page', '문서'], ['video', '비디오'], ['pic', '사진'], ['music', '음악'], null,
  ['pc', '컴퓨터', 'top'], ['diskc', '로컬 디스크 (C:)'], ['disk', '로컬 디스크 (D:)', 'sel'], ['diske', '이동식 디스크 (E:)'], null,
  ['net', '네트워크', 'top']
];
$('tree').innerHTML = tree.map(t => t
  ? `<div class="${t[2] || ''}"><svg width="16" height="16"><use href="#${t[0]}"/></svg>${t[1]}</div>`
  : '<div class="gap"></div>').join('');

// thumbnails
const line = (x1, y1, x2, y2, c, w = 1) => `<path d="M${x1} ${y1}L${x2} ${y2}" stroke="${c}" stroke-width="${w}"/>`;
function strip(opt) {
  let s = '';
  for (let i = 0; i < opt.h; i++) s += line(4, 2.5 + i * 16 / (opt.h - 1), 77, 2.5 + i * 16 / (opt.h - 1), '#e6e6e6');
  for (let i = 0; i <= opt.v; i++) s += line(6.5 + i * 70 / opt.v, 2, 6.5 + i * 70 / opt.v, 19, '#dcdcdc');
  if (opt.y) s += line(6, opt.y, 77, opt.y, opt.c || '#8ab6f3', 1.5);
  s += opt.bar ? line(6, 18.5, 78, 18.5, '#9b9b9b', 1) : `<path d="M12 20.5H78" stroke="#c5c5c5" stroke-dasharray="9 1.5"/>`;
  s += line(83, 2, 87, 2, '#c5cbd4');
  return `<svg class="shot" width="91" height="22">${s}</svg>`;
}
function square(cols, bar) {
  let s = '';
  for (let i = 0; i < 6; i++) s += line(9, 3.5 + i * 8.2, 65, 3.5 + i * 8.2, '#bcbcbc') + line(6, 3.5 + i * 8.2, 10, 3.5 + i * 8.2, '#aaa', 1.6);
  for (let i = 0; i <= cols; i++) s += line(11.5 + i * 53 / cols, 3, 11.5 + i * 53 / cols, 45, '#a6a6a6') + line(9.5 + i * 53 / cols, 47.5, 14 + i * 53 / cols, 47.5, '#aaa', 1.5);
  if (bar) s += line(11, 44, 65, 44, '#888', 2.4) + line(14, 44, 26, 44, '#555', 1.6);
  s += line(77, 4, 84, 4, '#ccc', 1.5) + line(36, 23.5, 39, 23.5, '#dbe8f8');
  return `<svg class="shot" width="91" height="52">${s}</svg>`;
}
const doc = '<svg width="67" height="86" viewBox="0 0 67 85"><use href="#doc"/></svg>';
const S = {
  '11_OUT3': { h: 4, v: 6, y: 6, c: '#b4d0f5' }, '11_OUT4': { h: 6, v: 6, y: 4 },
  '13_OUT3': { h: 3, v: 6, y: 2.5 }, '13_OUT4': { h: 6, v: 6, y: 3 },
  '15_OUT3': { h: 3, v: 6, y: 2.5 }, '15_OUT4': { h: 4, v: 6, y: 4 },
  '17_OUT3': { h: 3, v: 4, bar: 1 }, '17_OUT4': { h: 4, v: 6, y: 4 },
  '18_OUT3': { h: 4, v: 1, bar: 1 }, '18_OUT4': { h: 5, v: 1, bar: 1 },
  '19_OUT3': { h: 4, v: 6, y: 3 }, '19_OUT4': { h: 4, v: 4, y: 3, bar: 1 },
  '20_OUT3': { h: 4, v: 6, y: 3 }, '20_OUT4': { h: 4, v: 4, y: 3, bar: 1 }
};
let files = '';
for (let n = 9; n <= 20; n++) {
  const id = String(n).padStart(2, '0');
  for (const suf of ['', '_OUT3', '_OUT4', '_OUT12']) {
    const covered = n % 2 === 0 && n < 18 && suf;
    if (covered) { files += '<div></div>'; continue; }
    let art = doc;
    if (suf === '_OUT12') art = square(n <= 17 ? 5 : 4, n >= 17);
    else if (suf) art = strip(S[id + suf] || { h: 4, v: 6 });
    files += `<div class="file${n === 16 ? ' sel' : ''}">${art}<span>000_${id}${suf}</span></div>`;
  }
}
$('files').innerHTML = files;

// charts
const K = '#000';
const txt = (s, x, cy, w, cls = 'tick', anchor = 'end') =>
  `<text class="${cls}" x="${x}" y="${cy + (cls === 'tick' ? 4.7 : 4)}" text-anchor="${anchor}" textLength="${w}" lengthAdjust="spacingAndGlyphs">${s}</text>`;
function noise(x0, x1, yc, half, solid) {
  let faint = '', core = '', mid = '';
  for (let x = x0; x < x1; x++) {
    faint += `M${x + .5} ${(yc - half - rnd() * rnd() * 3.4).toFixed(1)}V${(yc + half + rnd() * rnd() * 3.4).toFixed(1)}`;
    core += `M${x + .5} ${(yc - half + 1.5 - rnd() * 2).toFixed(1)}V${(yc + half - 1.5 + rnd() * 2).toFixed(1)}`;
    mid += (x === x0 ? 'M' : 'L') + x + ' ' + (yc + (rnd() - .5) * half * 1.1).toFixed(1);
  }
  let s = `<path d="${faint}" stroke="#86b4f5" fill="none" opacity=".75"/><path d="${core}" stroke="#5f9df2" fill="none" opacity=".8"/><path d="${mid}" stroke="#3b86ee" fill="none" opacity=".7"/>`;
  if (solid) s += `<rect x="${solid[0]}" y="${yc - half}" width="${solid[1] - solid[0]}" height="${half * 2}" fill="#418cf0" opacity=".85"/>`;
  return s;
}

let c = '';
[61.5, 103.5, 145.5, 187.5, 230.5, 272.5].forEach((y, i) => {
  c += line(1469, y, 1764, y, K);
  if (i < 5) c += txt(5000 - 2000 * i, 1467, y - 1, i > 2 ? 33 : 28);
});
[1474.5, 1546.5, 1618.5, 1690.5, 1762.5].forEach(x => c += line(x, 61, x, 274, K));
c += '<rect x="1563" y="162" width="2" height="2" fill="#6aa5f3"/><rect x="1582" y="162" width="2" height="2" fill="#418cf0"/><rect x="1816" y="60" width="2" height="2" fill="#cfe1f7"/>';
c += txt('OUT1,2', 1833, 61, 39, 'tick', 'start');
$('chart1').innerHTML = c;

c = '';
[296.5, 371.5, 447.5, 523.5].forEach((y, i) => c += line(806, y, 1796, y, K) + txt(60 - 20 * i, 803, y - 1, i === 3 ? 7 : 14));
[818.5, 971.5, 1123.5, 1276.5, 1429.5, 1581.5, 1734.5].forEach((x, i) => {
  c += line(x, 296, x, 526, K);
  if (i) c += txt('01/11/2018 01:25:' + ['08.008', '11.021', '14.033', '17.046', '20.058', '23.071'][i - 1] + ' PM', x, 537, 136, 'xs', 'middle');
});
c += noise(819, 1796, 310.5, 5, [1324, 1416]) + line(1857, 296.5, 1879, 296.5, '#418cf0', 2) + txt('OUT3', 1884, 296.5, 30, 'tick', 'start');
$('chart3').innerHTML = c;

c = '';
[622.5, 674.5, 727.5, 780.5, 833.5].forEach((y, i) => c += line(807, y, 1812.5, y, K) + txt(40 - 10 * i, 804, y - 1, i === 4 ? 7 : 14));
[819.5, 1097.5, 1375.5, 1653.5].forEach((x, i) => {
  c += line(x, 622, x, 851, K);
  if (i) c += txt('01/11/2018 01:25:' + ['08.008', '11.021', '14.033'][i - 1] + ' PM', x, 858, 165, 'tick', 'middle');
});
c += noise(820, 1812, 642, 6);
c += `<rect x="819.5" y="833.5" width="993" height="13.500" fill="#d3d3d3" stroke="#000"/>
  <rect x="845.5" y="834.5" width="531.500" height="11.500" fill="#a9a9a9" stroke="#555"/><path d="M846 835.500H1376" stroke="#e0e0e0"/>
  <g fill="#bdbdbd" stroke="#555"><rect x="820.5" y="834.5" width="12" height="11.500"/><rect x="833.5" y="834.5" width="12" height="11.500"/><rect x="1799.500" y="834.5" width="12.500" height="11.500"/></g>
  <circle cx="826.500" cy="840.500" r="3" fill="none" stroke="#000"/><path d="M825 840.500h3" stroke="#000"/><path d="M841.500 837v7l-4.500-3.500zM1803.500 837v7l5-3.500z"/>`;
c += line(1858, 622.5, 1880, 622.5, '#418cf0', 2) + txt('OUT4', 1885, 622, 30, 'tick', 'start');
$('chart4').innerHTML = c;
```
